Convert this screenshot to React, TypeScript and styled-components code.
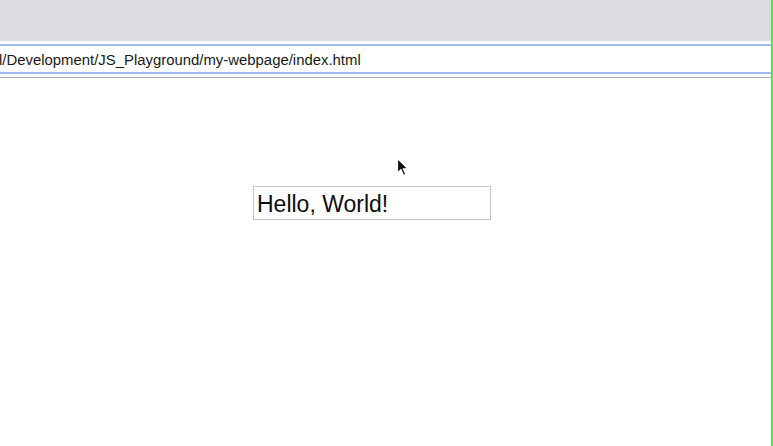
import React from "react";
import styled, { createGlobalStyle } from "styled-components";

const Global = createGlobalStyle`
  html, body { margin: 0; padding: 0; background: #ffffff; }
  body { font-family: "Liberation Sans", Arial, Helvetica, sans-serif; }
`;

const Frame = styled.div`
  position: relative;
  width: 771px;
  height: 446px;
  display: flex;
  flex-direction: column;
  border-right: 2px solid #3ef03e;
  background: #ffffff;
  overflow: hidden;
`;

const TopBar = styled.div`
  height: 41px;
  flex: none;
  background: #dcdde0;
`;

const AddressWrap = styled.div`
  flex: none;
  padding-top: 3px;
  padding-bottom: 3px;
  border-bottom: 1px solid #a9a9a9;
`;

const AddressField = styled.div`
  height: 26px;
  border-top: 2px solid #a1bbee;
  border-bottom: 2px solid #a1bbee;
  display: flex;
  align-items: center;
  background: #ffffff;
`;

const AddressText = styled.span`
  font-family: "Liberation Sans", Arial, sans-serif;
  font-size: 14.9px;
  color: #1a1a1a;
  white-space: nowrap;
  margin-left: -1px;
  padding-top: 1px;
`;

const Content = styled.div`
  flex: 1;
  padding-top: 108px;
  padding-left: 253px;
`;

const TextBox = styled.div`
  width: 236px;
  height: 32px;
  border: 1px solid #c4c4c4;
  display: flex;
  align-items: center;
  box-sizing: content-box;
`;

const BoxText = styled.span`
  font-family: "Liberation Sans", Arial, sans-serif;
  font-size: 23px;
  color: #0d0d0d;
  margin-left: 3px;
  padding-top: 2px;
`;

const Cursor = styled.svg`
  position: absolute;
  left: 396px;
  top: 157px;
`;

export default function App() {
  return (
    <>
      <Global />
      <Frame>
        <TopBar />
        <AddressWrap>
          <AddressField>
            <AddressText>l/Development/JS_Playground/my-webpage/index.html</AddressText>
          </AddressField>
        </AddressWrap>
        <Content>
          <TextBox>
            <BoxText>Hello, World!</BoxText>
          </TextBox>
        </Content>
        <Cursor width="15" height="21" viewBox="0 0 15 21">
          <path
            d="M1.5 1.5 L1.5 16 L5 12.6 L7.5 18.5 L9.8 17.5 L7.3 11.8 L12 11.8 Z"
            fill="#111"
            stroke="#fff"
            strokeWidth="1.2"
            strokeLinejoin="round"
          />
        </Cursor>
      </Frame>
    </>
  );
}
